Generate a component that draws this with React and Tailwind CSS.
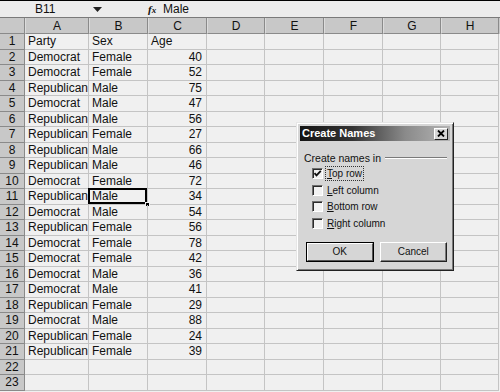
import React from 'react';

const rows = [
  ['Party', 'Sex', 'Age'],
  ['Democrat', 'Female', 40],
  ['Democrat', 'Female', 52],
  ['Republican', 'Male', 75],
  ['Democrat', 'Male', 47],
  ['Republican', 'Male', 56],
  ['Republican', 'Female', 27],
  ['Republican', 'Male', 66],
  ['Republican', 'Male', 46],
  ['Democrat', 'Female', 72],
  ['Republican', 'Male', 34],
  ['Democrat', 'Male', 54],
  ['Republican', 'Female', 56],
  ['Democrat', 'Female', 78],
  ['Democrat', 'Female', 42],
  ['Democrat', 'Male', 36],
  ['Democrat', 'Male', 41],
  ['Republican', 'Female', 29],
  ['Democrat', 'Male', 88],
  ['Republican', 'Female', 24],
  ['Republican', 'Female', 39],
  ['', '', ''],
  ['', '', ''],
];

const cols = ['A', 'B', 'C', 'D', 'E', 'F', 'G', 'H'];

const gridCols = 'grid grid-cols-[25px_64px_59px_59px_58px_59px_59px_58px_58px]';

const CheckRow = ({ checked, label, u, focus }) => (
  <div className="flex items-center h-[16.5px]">
    <div className="w-[11px] h-[11px] bg-[#f2f2f2] border-t border-l border-t-[#6e6e6e] border-l-[#6e6e6e] border-b border-r border-b-white border-r-white shadow-[inset_1px_1px_0_#2a2a2a] flex items-center justify-center">
      {checked && (
        <svg width="9" height="9" viewBox="0 0 9 9">
          <path d="M1.5 4.2 L3.5 6.4 L7.8 1.8" stroke="#111" strokeWidth="1.8" fill="none" />
        </svg>
      )}
    </div>
    <span className={`ml-[3px] px-[1px] leading-[13px] ${focus ? 'outline outline-1 outline-dotted outline-[#333]' : ''}`}>
      {label.slice(0, u)}
      <span className="underline">{label[u]}</span>
      {label.slice(u + 1)}
    </span>
  </div>
);

const App = () => {
  return (
    <div
      className="relative w-[500px] h-[392px] overflow-hidden bg-[#f0f0f0] text-[12px] text-[#111]"
      style={{ fontFamily: '"Liberation Sans", Arial, sans-serif' }}
    >
      {/* formula bar */}
      <div className="h-[18px] border-t border-t-black border-b border-b-[#7a7a7a] bg-[#ececec] flex items-center">
        <div className="w-[88px] h-full flex items-center pl-[35px]">B11</div>
        <div className="w-[60px] h-full flex items-center pl-[5px]">
          <svg width="9" height="5" viewBox="0 0 9 5">
            <path d="M0 0 H9 L4.5 5 Z" fill="#222" />
          </svg>
        </div>
        <div className="w-[12px] h-full flex items-center italic font-bold text-[11px]">
          <span style={{ fontFamily: '"Liberation Serif", serif' }}>f<span className="text-[9px]">x</span></span>
        </div>
        <div className="pl-[3px]">Male</div>
      </div>

      {/* column header */}
      <div className={`${gridCols} h-[16px] bg-[#c8c8c8]`}>
        <div className="border-r border-b border-[#8a8a8a]" />
        {cols.map((c) => (
          <div key={c} className="border-r border-b border-[#8a8a8a] border-l border-l-[#dcdcdc] flex items-center justify-center leading-none">
            {c}
          </div>
        ))}
      </div>

      {/* rows */}
      {rows.map((r, i) => (
        <div key={i} className={`${gridCols} h-[15.5px]`}>
          <div className="bg-[#c8c8c8] border-r border-b border-[#8a8a8a] flex items-center justify-center leading-none">
            {i + 1}
          </div>
          <div className="border-r border-b border-[#c4c4c4] flex items-center pl-[3px] leading-none whitespace-nowrap">{r[0]}</div>
          <div className="relative border-r border-b border-[#c4c4c4] flex items-center pl-[3px] leading-none">
            {r[1]}
            {i === 10 && (
              <>
                <div className="absolute -left-[1px] -top-[1px] right-0 bottom-0 border-2 border-black" />
                <div className="absolute -right-[3px] -bottom-[3px] w-[5px] h-[5px] bg-black border border-[#f0f0f0]" />
              </>
            )}
          </div>
          <div className={`border-r border-b border-[#c4c4c4] flex items-center leading-none ${i === 0 ? 'pl-[3px]' : 'justify-end pr-[4px]'}`}>
            {r[2]}
          </div>
          {cols.slice(3).map((c) => (
            <div key={c} className="border-r border-b border-[#c4c4c4]" />
          ))}
        </div>
      ))}

      {/* Create Names dialog */}
      <div className="absolute left-[296px] top-[122px] w-[158px] h-[149px] bg-[#d6d6d6] border border-t-[#e6e6e6] border-l-[#e6e6e6] border-r-[#222] border-b-[#222] shadow-[inset_1px_1px_0_#ffffff,inset_-1px_-1px_0_#7a7a7a] p-[3px]">
        <div className="h-[15px] flex items-center justify-between px-[2px] bg-[linear-gradient(to_right,#141414_0%,#333_35%,#8a8a8a_70%,#b4b4b4_100%)]">
          <span className="text-white font-bold text-[11px] leading-none">Create Names</span>
          <div className="w-[14px] h-[12px] bg-[#d6d6d6] border border-t-white border-l-white border-r-[#222] border-b-[#222] flex items-center justify-center">
            <svg width="8" height="7" viewBox="0 0 8 7">
              <path d="M1 0.5 L7 6.5 M7 0.5 L1 6.5" stroke="#000" strokeWidth="1.8" />
            </svg>
          </div>
        </div>

        <div className="pl-[4px] pr-[3px] pt-[12px] text-[10px]">
          <div className="flex items-center">
            <span className="leading-none text-[10.5px]">Create names in</span>
            <div className="flex-1 ml-[4px] border-t border-t-[#7a7a7a] border-b border-b-white" />
          </div>
          <div className="mt-[2px] pl-[8px]">
            <CheckRow checked label="Top row" u={0} focus />
            <CheckRow label="Left column" u={0} />
            <CheckRow label="Bottom row" u={0} />
            <CheckRow label="Right column" u={0} />
          </div>
          <div className="mt-[10px] flex gap-[6px] pl-[2px]">
            <div className="w-[68px] h-[20px] border border-black flex">
              <div className="flex-1 border border-t-white border-l-white border-r-[#555] border-b-[#555] flex items-center justify-center">
                OK
              </div>
            </div>
            <div className="w-[68px] h-[20px] border border-t-white border-l-white border-r-[#222] border-b-[#222] shadow-[inset_-1px_-1px_0_#7a7a7a] flex items-center justify-center">
              Cancel
            </div>
          </div>
        </div>
      </div>
    </div>
  );
};

export default App;
